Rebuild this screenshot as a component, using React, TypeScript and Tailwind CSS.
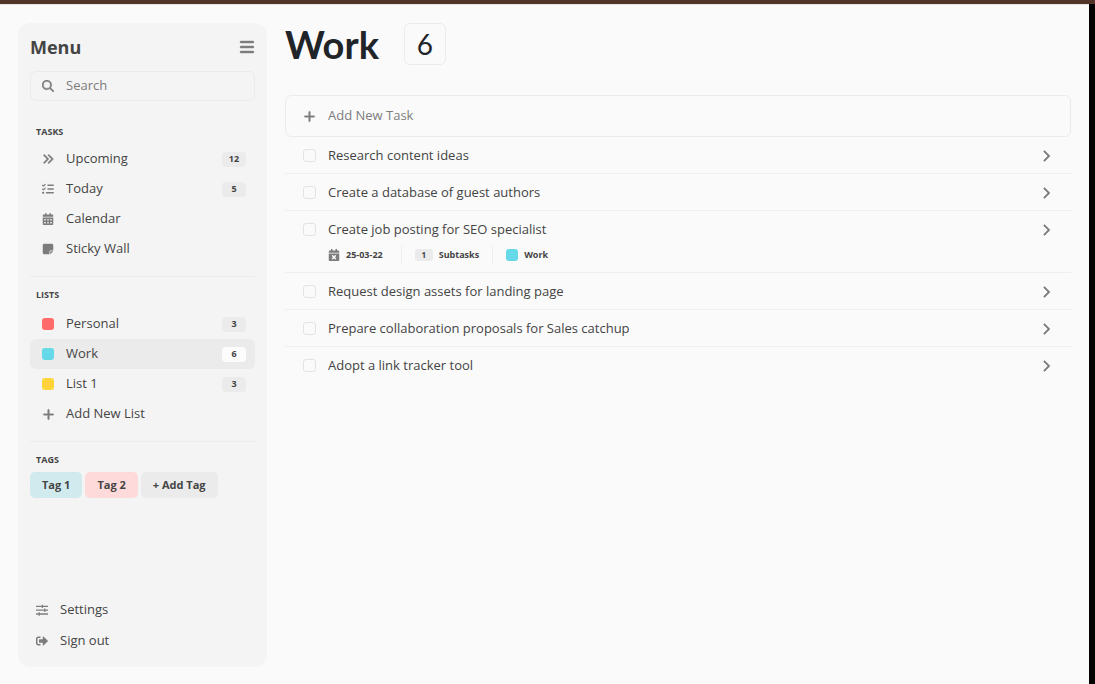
import { useState, type ReactNode } from "react";
import { FaCalendarTimes, FaSignOutAlt } from "react-icons/fa";
import {
  FaAnglesRight,
  FaBars,
  FaCalendarDays,
  FaChevronRight,
  FaListCheck,
  FaMagnifyingGlass,
  FaNoteSticky,
  FaPlus,
} from "react-icons/fa6";

type Task = { title: string; date?: string; subtasks?: number; list?: string };

const tasks: Task[] = [
  { title: "Research content ideas" },
  { title: "Create a database of guest authors" },
  { title: "Create job posting for SEO specialist", date: "25-03-22", subtasks: 1, list: "Work" },
  { title: "Request design assets for landing page" },
  { title: "Prepare collaboration proposals for Sales catchup" },
  { title: "Adopt a link tracker tool" },
];

function SlidersIcon() {
  return (
    <svg viewBox="0 0 12 12" className="size-3" fill="none" stroke="currentColor" aria-hidden="true">
      <path strokeWidth="1.3" d="M0 2.4h12M0 6.2h12M0 10h12" />
      <path strokeWidth="1.2" d="M6.4.7v3.4M8.8 4.5v3.4M3.2 8.3v3.4" />
    </svg>
  );
}

function NavItem({ icon, label, count, active }: { icon: ReactNode; label: string; count?: number; active?: boolean }) {
  return (
    <li>
      <a
        href="#"
        className={`flex h-[30px] items-center rounded-md pr-[9px] pl-3 ${active ? "bg-[#ebebeb]" : ""}`}
      >
        <span className="flex w-3 shrink-0 justify-center text-[#7c7c7c]">{icon}</span>
        <span className="ml-3 flex-1">{label}</span>
        {count !== undefined && (
          <span
            className={`flex h-[15px] w-6 items-center justify-center rounded-sm text-[9px] font-bold ${
              active ? "bg-[#fcfcfc]" : "bg-[#ebebeb]"
            }`}
          >
            {count}
          </span>
        )}
      </a>
    </li>
  );
}

function SectionTitle({ children }: { children: string }) {
  return <h3 className="px-1.5 text-[9px] leading-3 font-bold">{children}</h3>;
}

function Sidebar() {
  return (
    <aside className="flex w-[249px] shrink-0 flex-col rounded-xl bg-[#f4f4f4] px-3 pt-3 pb-[11px]">
      <div className="flex h-6 items-center justify-between">
        <h2 className="text-[18px] font-bold">Menu</h2>
        <button type="button" aria-label="Toggle menu" className="text-base text-[#7c7c7c]">
          <FaBars className="stroke-current stroke-[14]" />
        </button>
      </div>

      <label className="mt-3 flex h-[30px] items-center gap-3 rounded-md border border-[#ebebeb] px-[11px]">
        <FaMagnifyingGlass className="size-3 shrink-0 stroke-current stroke-[14] text-[#7c7c7c]" />
        <input
          type="text"
          aria-label="Search"
          placeholder="Search"
          className="w-full min-w-0 bg-transparent outline-none placeholder:text-[#7c7c7c]"
        />
      </label>

      <nav className="mt-[25px] flex flex-col">
        <SectionTitle>TASKS</SectionTitle>
        <ul className="mt-1.5 border-b border-[#ebebeb] pb-3">
          <NavItem icon={<FaAnglesRight className="size-3 stroke-current stroke-[14]" />} label="Upcoming" count={12} />
          <NavItem icon={<FaListCheck className="size-3" />} label="Today" count={5} />
          <NavItem icon={<FaCalendarDays className="size-3" />} label="Calendar" />
          <NavItem icon={<FaNoteSticky className="size-3" />} label="Sticky Wall" />
        </ul>

        <div className="mt-3">
          <SectionTitle>LISTS</SectionTitle>
        </div>
        <ul className="mt-2 border-b border-[#ebebeb] pb-3">
          <NavItem icon={<span className="size-3 rounded-[3px] bg-[#ff6b6b]" />} label="Personal" count={3} />
          <NavItem icon={<span className="size-3 rounded-[3px] bg-[#66d9e8]" />} label="Work" count={6} active />
          <NavItem icon={<span className="size-3 rounded-[3px] bg-[#ffd43b]" />} label="List 1" count={3} />
          <NavItem icon={<FaPlus className="size-[13px] shrink-0 stroke-current stroke-[14]" />} label="Add New List" />
        </ul>

        <div className="mt-3">
          <SectionTitle>TAGS</SectionTitle>
        </div>
        <div className="mt-1.5 flex gap-[3px] text-[11px] font-bold">
          <button type="button" className="h-[26px] rounded-[5px] bg-[#d1eaed] px-3">Tag 1</button>
          <button type="button" className="h-[26px] rounded-[5px] bg-[#ffdada] px-3">Tag 2</button>
          <button type="button" className="h-[26px] rounded-[5px] bg-[#ebebeb] px-3">+ Add Tag</button>
        </div>
      </nav>

      <div className="mt-auto">
        <a href="#" className="flex h-[31px] items-center gap-3 px-1.5">
          <span className="text-[#7c7c7c]"><SlidersIcon /></span>
          Settings
        </a>
        <a href="#" className="flex h-[31px] items-center gap-3 px-1.5">
          <FaSignOutAlt className="size-3 text-[#7c7c7c]" />
          Sign out
        </a>
      </div>
    </aside>
  );
}

function TaskRow({ task }: { task: Task }) {
  const [done, setDone] = useState(false);
  return (
    <li className="border-b border-[#efefef] px-[18px] pt-[9px] pb-2 last:border-b-0">
      <div className="flex h-[19px] items-center">
        <label className="flex flex-1 items-center gap-3">
          <input
            type="checkbox"
            checked={done}
            onChange={() => setDone(!done)}
            className="size-[13px] shrink-0 appearance-none rounded-[3px] border border-[#e3e3e3] checked:bg-[#7c7c7c]"
          />
          {task.title}
        </label>
        <button type="button" aria-label={`Open ${task.title}`} className="px-px text-[#7c7c7c]">
          <FaChevronRight className="size-3 stroke-current stroke-[24]" />
        </button>
      </div>
      {task.date && (
        <div className="mt-1.5 flex h-[19px] items-center pl-[25px] text-[9px] font-bold">
          <FaCalendarTimes className="size-3 text-[#7c7c7c]" />
          <span className="ml-1.5">{task.date}</span>
          <span className="ml-[18px] flex h-full items-center gap-1.5 border-x border-[#efefef] px-[13px]">
            <span className="flex h-3 w-[18px] items-center justify-center rounded-[3px] bg-[#ebebeb] text-[8px]">
              {task.subtasks}
            </span>
            Subtasks
          </span>
          <span className="ml-[13px] size-3 rounded-[3px] bg-[#66d9e8]" />
          <span className="ml-1.5">{task.list}</span>
        </div>
      )}
    </li>
  );
}

export default function App() {
  return (
    <div className="flex min-h-screen flex-col border-t-4 border-[#523528] bg-black font-['Open_Sans','Noto_Sans',sans-serif] text-[13px] text-[#444444]">
      <div className="mr-1.5 flex flex-1 gap-[18px] border-t border-[#e5e5e5] bg-[#fafafa] p-[18px] pb-[17px]">
        <Sidebar />
        <main className="min-w-0 flex-1">
          <header className="flex h-[42px] items-center gap-[25px] font-['Lato','Noto_Sans',sans-serif] text-[#212529]">
            <h1 className="text-[38px] leading-none font-bold">Work</h1>
            <span className="flex size-[42px] items-center justify-center rounded-md border border-[#ebebeb] text-[28px]">
              6
            </span>
          </header>
          <label className="mt-[30px] flex h-[42px] items-center gap-3 rounded-md border border-[#ebebeb] px-[17px]">
            <FaPlus className="size-[13px] shrink-0 stroke-current stroke-[14] text-[#7c7c7c]" />
            <input
              type="text"
              aria-label="Add New Task"
              placeholder="Add New Task"
              className="w-full min-w-0 bg-transparent outline-none placeholder:text-[#7c7c7c]"
            />
          </label>
          <ul>
            {tasks.map((task) => (
              <TaskRow key={task.title} task={task} />
            ))}
          </ul>
        </main>
      </div>
    </div>
  );
}
